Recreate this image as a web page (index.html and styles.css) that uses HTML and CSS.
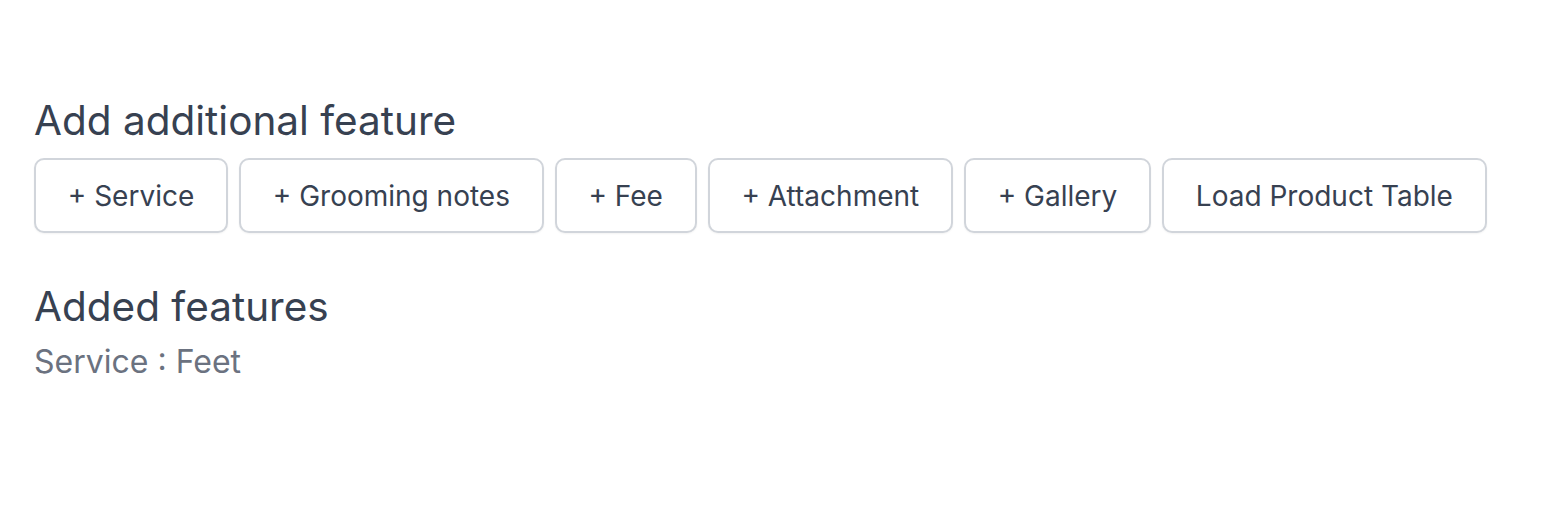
FILE: index.html
```html
<!DOCTYPE html>
<html>
<head>
<meta charset="utf-8">
<link rel="stylesheet" href="styles.css">
</head>
<body>
<div class="page">
  <section class="add">
    <h2 class="title">Add additional feature</h2>
    <div class="buttons">
      <button class="btn">+ Service</button>
      <button class="btn">+ Grooming notes</button>
      <button class="btn">+ Fee</button>
      <button class="btn">+ Attachment</button>
      <button class="btn">+ Gallery</button>
      <button class="btn">Load Product Table</button>
    </div>
  </section>
  <section class="added">
    <h2 class="title">Added features</h2>
    <div class="item">Service : Feet</div>
  </section>
</div>
</body>
</html>
```
FILE: styles.css
```css
html, body {
  margin: 0;
  padding: 0;
  background: #ffffff;
}
.page {
  font-family: Inter, "Noto Sans", sans-serif;
  padding: 97px 34px 0 34px;
  color: #374151;
}
.title {
  margin: 0;
  font-size: 40.5px;
  line-height: 48px;
  font-weight: 400;
  color: #374151;
}
.buttons {
  display: flex;
  gap: 11px;
  margin-top: 13px;
}
.btn {
  font-family: inherit;
  font-size: 28px;
  line-height: 40px;
  color: #374151;
  background: #fff;
  border: 2px solid #d1d5db;
  border-radius: 10px;
  padding: 15.5px 31.75px;
  box-shadow: 0 1px 2px rgba(0,0,0,0.05);
}
.added {
  margin-top: 50px;
}
.item {
  margin-top: 9px;
  font-size: 32px;
  line-height: 44px;
  color: #6b7280;
}
```
